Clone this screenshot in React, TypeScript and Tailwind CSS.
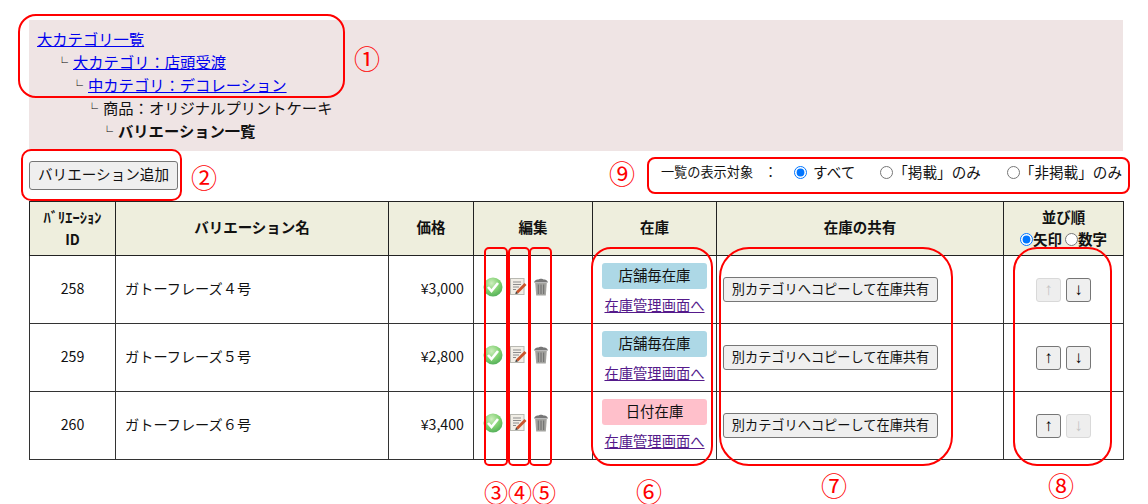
import React from "react";

const font = { fontFamily: '"Noto Sans CJK JP", sans-serif' };

const CheckIcon = () => (
  <svg width="20" height="20" viewBox="0 0 20 20" className="shrink-0">
    <defs>
      <radialGradient id="chk" cx="42%" cy="30%" r="80%">
        <stop offset="0%" stopColor="#cdeebd" />
        <stop offset="55%" stopColor="#7dce6e" />
        <stop offset="100%" stopColor="#47a654" />
      </radialGradient>
    </defs>
    <circle cx="10" cy="10" r="9.5" fill="url(#chk)" />
    <path d="M5 10 L8.5 14 L15 6" fill="none" stroke="#fff" strokeWidth="2.6" />
  </svg>
);

const NoteIcon = () => (
  <svg width="17" height="17" viewBox="0 0 17 17" className="shrink-0">
    <rect x="0.5" y="0.5" width="13.5" height="16" fill="#f1eee6" stroke="#b9b9b2" />
    <path d="M3 4h8M3 6.5h8M3 9h6M3 11.5h3" stroke="#8c8c8c" />
    <path d="M6 13.5 L14.5 5 L16.5 7 L8 15.5 Z" fill="#c9552c" />
    <path d="M6 13.5 L5.3 16 L8 15.5 Z" fill="#333" />
  </svg>
);

const TrashIcon = () => (
  <svg width="16" height="18" viewBox="0 0 16 18" className="shrink-0">
    <path d="M1 4.5 C1.5 2 4 1.5 5.5 1.5 C6 0.5 10 0.5 10.5 1.5 C12 1.5 14.5 2 15 4.5 Z" fill="#777" />
    <path d="M2.2 5 H13.8 L12.8 17.5 H3.2 Z" fill="#a3a39f" />
    <path d="M5.3 6.5V16M8 6.5V16M10.7 6.5V16" stroke="#6b6b6b" />
  </svg>
);

const Radio = ({ checked, name }: { checked?: boolean; name: string }) => (
  <input
    type="radio"
    name={name}
    defaultChecked={checked}
    className="m-0 h-[13px] w-[13px] shrink-0"
  />
);

const ArrowBtn = ({ label, disabled }: { label: string; disabled?: boolean }) => (
  <button
    disabled={disabled}
    className={
      disabled
        ? "flex h-[24px] w-[25px] items-center justify-center rounded-[3px] border border-[#d9d9d9] bg-[#eeeeee] font-['Liberation_Sans'] text-[17px] leading-none text-[#c4c4c4]"
        : "flex h-[24px] w-[25px] items-center justify-center rounded-[3px] border border-[#767676] bg-[#efefef] font-['Liberation_Sans'] text-[17px] leading-none text-black"
    }
  >
    {label}
  </button>
);

const Tee = () => <span className="inline-block w-[17px] text-[12px] leading-none text-black">└</span>;

type Row = {
  id: number;
  name: string;
  price: string;
  stock: string;
  badge: string;
  upOff?: boolean;
  downOff?: boolean;
};

const rows: Row[] = [
  { id: 258, name: "ガトーフレーズ４号", price: "¥3,000", stock: "店舗毎在庫", badge: "bg-[#add8e6]", upOff: true },
  { id: 259, name: "ガトーフレーズ５号", price: "¥2,800", stock: "店舗毎在庫", badge: "bg-[#add8e6]" },
  { id: 260, name: "ガトーフレーズ６号", price: "¥3,400", stock: "日付在庫", badge: "bg-[#ffc0cb]", downOff: true },
];

const th = "border border-[#222] bg-[#eeeedd] p-0 text-center align-middle text-[14.5px] font-bold";
const td = "border border-[#333] p-0 align-middle";

// red annotation boxes drawn over the page
const marks = [
  "left-[18px] top-[14px] h-[84px] w-[327px] rounded-[18px]",
  "left-[21px] top-[149px] h-[52px] w-[161px] rounded-[10px]",
  "left-[647px] top-[157px] h-[37px] w-[483px] rounded-[8px]",
  "left-[484px] top-[247px] h-[219px] w-[24px] rounded-[5px]",
  "left-[508px] top-[247px] h-[219px] w-[22px] rounded-[5px]",
  "left-[529px] top-[247px] h-[219px] w-[23px] rounded-[5px]",
  "left-[591px] top-[247px] h-[219px] w-[122px] rounded-[20px]",
  "left-[719px] top-[247px] h-[219px] w-[234px] rounded-[30px]",
  "left-[1013px] top-[247px] h-[219px] w-[99px] rounded-[24px]",
];

const nums = [
  { t: "①", c: "left-[354px] top-[45px] text-[26px] leading-[26px]" },
  { t: "②", c: "left-[191px] top-[164px] text-[26px] leading-[26px]" },
  { t: "⑨", c: "left-[609px] top-[160px] text-[26px] leading-[26px]" },
  { t: "③", c: "left-[484px] top-[480px] text-[24px] leading-[24px]" },
  { t: "④", c: "left-[508px] top-[480px] text-[24px] leading-[24px]" },
  { t: "⑤", c: "left-[532px] top-[480px] text-[24px] leading-[24px]" },
  { t: "⑥", c: "left-[636px] top-[478px] text-[26px] leading-[26px]" },
  { t: "⑦", c: "left-[821px] top-[472px] text-[26px] leading-[26px]" },
  { t: "⑧", c: "left-[1048px] top-[472px] text-[26px] leading-[26px]" },
];

export default function App() {
  return (
    <div className="relative h-[504px] w-[1148px] overflow-hidden bg-white pl-[29px] pt-[20px] text-[#111]" style={font}>
      <div className="h-[131px] w-[1094px] bg-[#efe4e4] pl-[8px] pt-[7px] text-[15.3px] leading-[23px]">
        <div className="h-[23px]">
          <a href="#" className="text-[#0000ee] underline">大カテゴリ一覧</a>
        </div>
        <div className="h-[23px] pl-[19px]">
          <Tee />
          <a href="#" className="text-[#0000ee] underline">大カテゴリ：店頭受渡</a>
        </div>
        <div className="h-[23px] pl-[34px]">
          <Tee />
          <a href="#" className="text-[#0000ee] underline">中カテゴリ：デコレーション</a>
        </div>
        <div className="h-[23px] pl-[49px]">
          <Tee />
          商品：オリジナルプリントケーキ
        </div>
        <div className="h-[23px] pl-[64px]">
          <Tee />
          <b>バリエーション一覧</b>
        </div>
      </div>

      <div className="flex h-[50px] items-start justify-between pr-[26px]">
        <button className="mt-[10px] h-[29px] w-[149px] rounded-[3px] border border-[#767676] bg-[#efefef] pb-[3px] text-[14.6px] text-[#111]">
          バリエーション追加
        </button>
        <div className="mt-[12px] flex items-center text-[14.6px] leading-[18px]">
          <span className="w-[92px] whitespace-nowrap text-[13.2px]">一覧の表示対象</span>
          <span className="ml-[11px] text-[13.2px]">：</span>
          <label className="ml-[17px] flex items-center gap-[6px]">
            <Radio name="target" checked />
            すべて
          </label>
          <label className="ml-[25px] flex items-center">
            <Radio name="target" />
            「掲載」のみ
          </label>
          <label className="ml-[26px] flex items-center">
            <Radio name="target" />
            「非掲載」のみ
          </label>
        </div>
      </div>

      <table className="w-[1094px] table-fixed border-collapse text-[14.2px]">
        <colgroup>
          <col className="w-[86px]" />
          <col className="w-[273px]" />
          <col className="w-[85px]" />
          <col className="w-[119px]" />
          <col className="w-[124px]" />
          <col className="w-[287px]" />
          <col className="w-[120px]" />
        </colgroup>
        <thead>
          <tr className="h-[54px]">
            <th className={th}>
              <div className="pb-[3px] text-[14.5px] leading-[20px]">ﾊﾞﾘｴｰｼｮﾝ</div>
              <div className="pb-[3px] text-[14px] leading-[18px]">ID</div>
            </th>
            <th className={`${th} pb-[3px]`}>バリエーション名</th>
            <th className={`${th} pb-[3px]`}>価格</th>
            <th className={`${th} pb-[3px]`}>編集</th>
            <th className={`${th} pb-[3px]`}>在庫</th>
            <th className={`${th} pb-[3px]`}>在庫の共有</th>
            <th className={th}>
              <div className="pb-[3px] leading-[20px]">並び順</div>
              <div className="flex items-center justify-center gap-0 pb-[2px] text-[14.5px] leading-[18px]">
                <Radio name="order" checked />
                矢印
                <span className="ml-[3px] flex"><Radio name="order" /></span>
                数字
              </div>
            </th>
          </tr>
        </thead>
        <tbody>
          {rows.map((r) => (
            <tr key={r.id} className="h-[68px]">
              <td className={`${td} pb-[2px] text-center`}>{r.id}</td>
              <td className={`${td} pb-[2px] pl-[9px]`}>{r.name}</td>
              <td className={`${td} pb-[2px] pr-[9px] text-right`}>{r.price}</td>
              <td className={td}>
                <div className="flex items-center pb-[6px] pl-[9px]">
                  <CheckIcon />
                  <span className="ml-[7px] flex"><NoteIcon /></span>
                  <span className="ml-[6px] flex"><TrashIcon /></span>
                </div>
              </td>
              <td className={td}>
                <div className="flex flex-col items-center pb-[2px]">
                  <div className={`flex h-[26px] w-[105px] items-center justify-center rounded-[3px] pb-[2px] text-[14.4px] ${r.badge}`}>
                    {r.stock}
                  </div>
                  <a href="#" className="mt-[6px] text-[14.3px] leading-[20px] text-[#551a8b] underline">在庫管理画面へ</a>
                </div>
              </td>
              <td className={td}>
                <div className="flex pl-[6px]">
                  <button className="h-[25px] w-[215px] rounded-[3px] border border-[#767676] bg-[#efefef] pb-[2px] text-[13.2px] text-[#111]">
                    別カテゴリへコピーして在庫共有
                  </button>
                </div>
              </td>
              <td className={td}>
                <div className="flex justify-center gap-[5px]">
                  <ArrowBtn label="↑" disabled={r.upOff} />
                  <ArrowBtn label="↓" disabled={r.downOff} />
                </div>
              </td>
            </tr>
          ))}
        </tbody>
      </table>

      {marks.map((m) => (
        <div key={m} className={`pointer-events-none absolute border-2 border-[#ff0000] ${m}`} />
      ))}
      {nums.map((n) => (
        <span key={n.t} className={`absolute text-[#ff0000] ${n.c}`}>
          {n.t}
        </span>
      ))}
    </div>
  );
}
